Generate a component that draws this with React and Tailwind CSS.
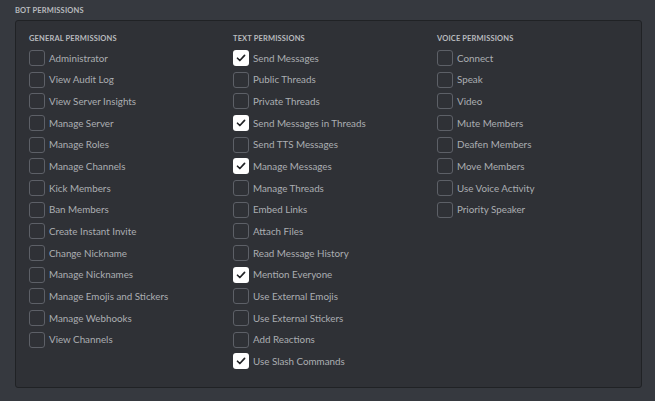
const general = [
  "Administrator",
  "View Audit Log",
  "View Server Insights",
  "Manage Server",
  "Manage Roles",
  "Manage Channels",
  "Kick Members",
  "Ban Members",
  "Create Instant Invite",
  "Change Nickname",
  "Manage Nicknames",
  "Manage Emojis and Stickers",
  "Manage Webhooks",
  "View Channels",
];

const text = [
  ["Send Messages", true],
  ["Public Threads", false],
  ["Private Threads", false],
  ["Send Messages in Threads", true],
  ["Send TTS Messages", false],
  ["Manage Messages", true],
  ["Manage Threads", false],
  ["Embed Links", false],
  ["Attach Files", false],
  ["Read Message History", false],
  ["Mention Everyone", true],
  ["Use External Emojis", false],
  ["Use External Stickers", false],
  ["Add Reactions", false],
  ["Use Slash Commands", true],
];

const voice = [
  "Connect",
  "Speak",
  "Video",
  "Mute Members",
  "Deafen Members",
  "Move Members",
  "Use Voice Activity",
  "Priority Speaker",
];

function Check({ label, checked }) {
  return (
    <div className="flex items-center h-[21.7px]">
      {checked ? (
        <span className="w-[16px] h-[16px] rounded-[3px] bg-white flex items-center justify-center shrink-0">
          <svg viewBox="0 0 12 12" className="w-[10px] h-[10px]">
            <path d="M1.8 6.3 L4.6 9 L10.3 2.8" fill="none" stroke="#202225" strokeWidth="2" strokeLinecap="round" strokeLinejoin="round" />
          </svg>
        </span>
      ) : (
        <span className="w-[16px] h-[16px] rounded-[3px] border border-[#5d6067] shrink-0" />
      )}
      <span className="ml-[4px] text-[9.8px] text-[#abaeb2] whitespace-nowrap">{label}</span>
    </div>
  );
}

function Column({ title, children }) {
  return (
    <div className="w-[204px]">
      <div className="text-[7.5px] font-bold uppercase tracking-[0.02em] text-[#b9bbbe] h-[11px] mb-[3.5px]">{title}</div>
      {children}
    </div>
  );
}

export default function App() {
  return (
    <div className="w-[655px] h-[401px] bg-[#36393f] pt-[5px] pl-[15px]" style={{ fontFamily: "Lato, 'Open Sans', sans-serif" }}>
      <div className="text-[7.5px] font-bold uppercase text-[#b9bbbe] h-[15px] leading-[11px] tracking-[0.02em]">Bot Permissions</div>
      <div className="w-[627px] h-[368px] bg-[#2f3136] border border-[#202225] rounded-[3px] pt-[11.5px] pl-[13px] flex">
        <Column title="General Permissions">
          {general.map((g) => (
            <Check key={g} label={g} />
          ))}
        </Column>
        <Column title="Text Permissions">
          {text.map(([t, c]) => (
            <Check key={t} label={t} checked={c} />
          ))}
        </Column>
        <Column title="Voice Permissions">
          {voice.map((v) => (
            <Check key={v} label={v} />
          ))}
        </Column>
      </div>
    </div>
  );
}
